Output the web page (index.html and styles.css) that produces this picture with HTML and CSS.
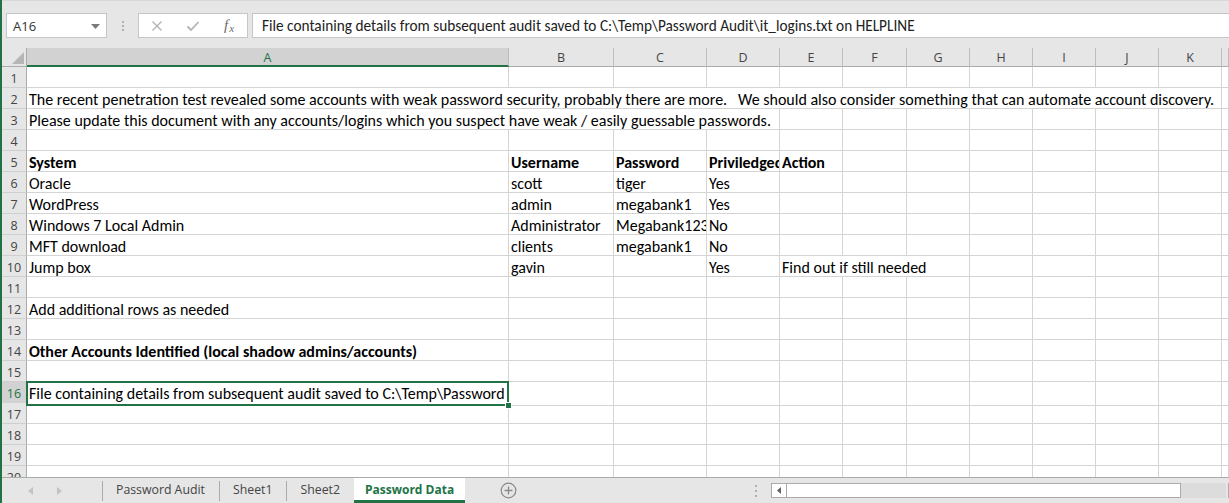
FILE: index.html
```html
<!DOCTYPE html>
<html>
<head>
<meta charset="utf-8">
<link rel="stylesheet" href="styles.css">
</head>
<body>
<div class="app">
  <div class="fbar">
    <div class="namebox"><span>A16</span><svg class="dd" width="9" height="5" viewBox="0 0 9 5"><polygon points="0,0 9,0 4.5,5" fill="#7a7a7a"/></svg></div>
    <div class="vdots"><i></i><i></i><i></i></div>
    <div class="fbtns">
      <span class="fb"><svg width="12" height="12" viewBox="0 0 12 12"><path d="M1.5 1.5 L10.5 10.5 M10.5 1.5 L1.5 10.5" stroke="#b3b3b3" stroke-width="1.4" fill="none"/></svg></span>
      <span class="fb"><svg width="14" height="12" viewBox="0 0 14 12"><path d="M1.5 6.5 L5 10 L12.5 2" stroke="#b3b3b3" stroke-width="1.8" fill="none"/></svg></span>
      <span class="fb fx"><span class="fxf">f</span><span class="fxx">x</span></span>
    </div>
    <div class="finput">File containing details from subsequent audit saved to C:\Temp\Password Audit\it_logins.txt on HELPLINE</div>
  </div>

  <div class="sheet">
    <div class="row head">
      <span class="corner"><svg width="12" height="12" viewBox="0 0 12 12"><polygon points="12,0 12,12 0,12" fill="#b5b5b5"/></svg></span>
      <span class="ch selc">A</span><span class="ch">B</span><span class="ch">C</span><span class="ch">D</span><span class="ch">E</span><span class="ch">F</span><span class="ch">G</span><span class="ch">H</span><span class="ch">I</span><span class="ch">J</span><span class="ch">K</span><span class="ch"></span>
    </div>
    <div class="row"><span class="rh">1</span><span></span><span></span><span></span><span></span><span></span><span></span><span></span><span></span><span></span><span></span><span></span><span></span></div>
    <div class="row"><span class="rh">2</span><span class="s11">The recent penetration test revealed some accounts with weak password security, probably there are more.   We should also consider something that can automate account discovery.</span><span></span></div>
    <div class="row"><span class="rh">3</span><span class="s4">Please update this document with any accounts/logins which you suspect have weak / easily guessable passwords.</span><span></span><span></span><span></span><span></span><span></span><span></span><span></span><span></span></div>
    <div class="row"><span class="rh">4</span><span></span><span></span><span></span><span></span><span></span><span></span><span></span><span></span><span></span><span></span><span></span><span></span></div>
    <div class="row bold"><span class="rh">5</span><span>System</span><span>Username</span><span>Password</span><span>Priviledged</span><span>Action</span><span></span><span></span><span></span><span></span><span></span><span></span><span></span></div>
    <div class="row"><span class="rh">6</span><span>Oracle</span><span>scott</span><span>tiger</span><span>Yes</span><span></span><span></span><span></span><span></span><span></span><span></span><span></span><span></span></div>
    <div class="row"><span class="rh">7</span><span>WordPress</span><span>admin</span><span>megabank1</span><span>Yes</span><span></span><span></span><span></span><span></span><span></span><span></span><span></span><span></span></div>
    <div class="row"><span class="rh">8</span><span>Windows 7 Local Admin</span><span>Administrator</span><span>Megabank123</span><span>No</span><span></span><span></span><span></span><span></span><span></span><span></span><span></span><span></span></div>
    <div class="row"><span class="rh">9</span><span>MFT download</span><span>clients</span><span>megabank1</span><span>No</span><span></span><span></span><span></span><span></span><span></span><span></span><span></span><span></span></div>
    <div class="row"><span class="rh">10</span><span>Jump box</span><span>gavin</span><span></span><span>Yes</span><span class="s3">Find out if still needed</span><span></span><span></span><span></span><span></span><span></span></div>
    <div class="row"><span class="rh">11</span><span></span><span></span><span></span><span></span><span></span><span></span><span></span><span></span><span></span><span></span><span></span><span></span></div>
    <div class="row"><span class="rh">12</span><span>Add additional rows as needed</span><span></span><span></span><span></span><span></span><span></span><span></span><span></span><span></span><span></span><span></span><span></span></div>
    <div class="row"><span class="rh">13</span><span></span><span></span><span></span><span></span><span></span><span></span><span></span><span></span><span></span><span></span><span></span><span></span></div>
    <div class="row bold"><span class="rh">14</span><span>Other Accounts Identified (local shadow admins/accounts)</span><span></span><span></span><span></span><span></span><span></span><span></span><span></span><span></span><span></span><span></span><span></span></div>
    <div class="row"><span class="rh">15</span><span></span><span></span><span></span><span></span><span></span><span></span><span></span><span></span><span></span><span></span><span></span><span></span></div>
    <div class="row"><span class="rh selr">16</span><span class="sel"><span class="clip">File containing details from subsequent audit saved to C:\Temp\Password Audit\it_logins.txt on HELPLINE</span><b class="handle"></b></span><span></span><span></span><span></span><span></span><span></span><span></span><span></span><span></span><span></span><span></span><span></span></div>
    <div class="row"><span class="rh">17</span><span></span><span></span><span></span><span></span><span></span><span></span><span></span><span></span><span></span><span></span><span></span><span></span></div>
    <div class="row"><span class="rh">18</span><span></span><span></span><span></span><span></span><span></span><span></span><span></span><span></span><span></span><span></span><span></span><span></span></div>
    <div class="row"><span class="rh">19</span><span></span><span></span><span></span><span></span><span></span><span></span><span></span><span></span><span></span><span></span><span></span><span></span></div>
    <div class="row"><span class="rh">20</span><span></span><span></span><span></span><span></span><span></span><span></span><span></span><span></span><span></span><span></span><span></span><span></span></div>
  </div>

  <div class="tabbar">
    <div class="nav">
      <svg width="5" height="8" viewBox="0 0 5 8"><polygon points="5,0 5,8 0,4" fill="#c3c3c3"/></svg>
      <svg width="5" height="8" viewBox="0 0 5 8"><polygon points="0,0 0,8 5,4" fill="#c3c3c3"/></svg>
    </div>
    <div class="tab">Password Audit</div>
    <div class="tab">Sheet1</div>
    <div class="tab">Sheet2</div>
    <div class="tab active">Password Data</div>
    <div class="addsheet"><svg width="17" height="17" viewBox="0 0 17 17"><circle cx="8.5" cy="8.5" r="7.3" stroke="#8a8a8a" stroke-width="1.2" fill="none"/><path d="M8.5 4.5 V12.5 M4.5 8.5 H12.5" stroke="#8a8a8a" stroke-width="1.3"/></svg></div>
    <div class="hscroll">
      <div class="vdots small"><i></i><i></i><i></i></div>
      <div class="sbar">
        <span class="sbtn"><svg width="4" height="7" viewBox="0 0 4 7"><polygon points="4,0 4,7 0,3.5" fill="#606060"/></svg></span>
        <span class="thumb"></span>
        <span class="track"></span>
        <span class="sbtn"></span>
      </div>
    </div>
  </div>
</div>
</body>
</html>
```

FILE: styles.css
```css
* { box-sizing: border-box; }
html, body { margin: 0; padding: 0; }
body {
  width: 1229px;
  height: 503px;
  overflow: hidden;
  background: #e6e6e6;
  font-family: "Open Sans", "Noto Sans", sans-serif;
}
.app {
  height: 503px;
  border-left: 2px solid #217346;
  display: flex;
  flex-direction: column;
  overflow: hidden;
}

/* formula bar */
.fbar {
  height: 48px;
  flex: none;
  display: flex;
  align-items: flex-start;
  padding: 12px 0 0 4px;
  border-top: 1px solid #d7d7d7;
}
.namebox {
  width: 101px;
  height: 25px;
  background: #fff;
  border: 1px solid #c6c6c6;
  display: flex;
  align-items: center;
  justify-content: space-between;
  padding: 0 6px 0 6px;
  font-size: 13px;
  color: #333;
}
.dd { margin-top: 1px; }
.vdots {
  width: 3px;
  height: 25px;
  margin-left: 15px;
  display: flex;
  flex-direction: column;
  justify-content: center;
  gap: 2px;
}
.vdots i {
  display: block;
  width: 2px;
  height: 2px;
  background: #b0b0b0;
}
.fbtns {
  margin-left: 13px;
  width: 110px;
  height: 25px;
  background: #fff;
  border: 1px solid #c6c6c6;
  display: flex;
  align-items: center;
}
.fb {
  width: 36px;
  height: 23px;
  display: flex;
  align-items: center;
  justify-content: center;
}
.fx {
  font-family: "Liberation Serif", serif;
  font-style: italic;
  color: #6a6a6a;
  font-size: 15px;
}
.fxx { font-size: 11px; margin-top: 4px; margin-left: 1px; }
.finput {
  flex: 1;
  margin-left: 4px;
  height: 25px;
  background: #fff;
  border: 1px solid #c6c6c6;
  border-right: none;
  padding-left: 9px;
  font-family: Carlito, "Liberation Sans", sans-serif;
  font-size: 15.3px;
  line-height: 23px;
  color: #222;
  white-space: nowrap;
  overflow: hidden;
}

/* sheet */
.sheet {
  flex: 1;
  background: #fff;
  overflow: hidden;
}
.row {
  display: grid;
  grid-template-columns: 25px 482px 105px 93px 73px 63px 64px 63px 63px 63px 63px 63px 1fr;
  height: 21px;
}
.row > span {
  border-right: 1px solid #d4d4d4;
  border-bottom: 1px solid #d4d4d4;
  padding: 0 2px;
  font-family: Carlito, "Liberation Sans", sans-serif;
  font-size: 16px;
  line-height: 23px;
  color: #000;
  white-space: pre;
  overflow: hidden;
}
.row.bold > span { font-weight: bold; }
.row > .rh {
  background: #e6e6e6;
  border-right: 1px solid #ababab;
  border-bottom: 1px solid #cfcfcf;
  font-family: "Open Sans", "Noto Sans", sans-serif;
  font-weight: normal !important;
  font-size: 12.5px;
  line-height: 23px;
  color: #444;
  text-align: center;
  padding: 0;
}
.row > .selr { background: #d2d2d2; color: #217346; }
.row.head { height: 19px; }
.row.head > span {
  background: #e6e6e6;
  border-right: 1px solid #bdbdbd;
  border-bottom: 1px solid #ababab;
  font-family: "Open Sans", "Noto Sans", sans-serif;
  font-size: 12.5px;
  line-height: 19px;
  color: #444;
  text-align: center;
  padding: 0;
}
.row.head > .corner {
  border-right: 1px solid #ababab;
  display: flex;
  align-items: flex-end;
  justify-content: flex-end;
  padding: 0 2px 2px 0;
}
.row.head > .selc {
  background: #d2d2d2;
  border-bottom: 2px solid #217346;
  color: #217346;
}
.s11 { grid-column: span 11; }
.s4 { grid-column: span 4; }
.s3 { grid-column: span 3; }

.row > .sel {
  position: relative;
  overflow: visible;
}
.sel .clip {
  display: block;
  overflow: hidden;
  white-space: pre;
}
.sel::after {
  content: "";
  position: absolute;
  left: -1px;
  top: -1px;
  right: -1px;
  bottom: -1px;
  border: 2px solid #217346;
  pointer-events: none;
}
.handle {
  position: absolute;
  right: -4px;
  bottom: -4px;
  width: 7px;
  height: 7px;
  background: #217346;
  border: 1px solid #fff;
  z-index: 2;
}

/* tab bar */
.tabbar {
  height: 26px;
  flex: none;
  display: flex;
  align-items: stretch;
  border-top: 1px solid #ababab;
  background: #e6e6e6;
  font-size: 12.3px;
  color: #444;
}
.nav {
  width: 100px;
  display: flex;
  align-items: center;
  gap: 24px;
  padding-left: 26px;
}
.tab {
  position: relative;
  display: flex;
  align-items: center;
  padding: 0 14px 2px 14px;
  white-space: nowrap;
}
.tab::before {
  content: "";
  position: absolute;
  left: 0;
  top: 3px;
  bottom: 2px;
  width: 1px;
  background: #ababab;
}
.tab.active {
  background: #fff;
  color: #217346;
  font-weight: bold;
  font-size: 12px;
  padding: 0 11px 0 11px;
  border-bottom: 3px solid #217346;
}
.tab.active::before { display: none; }
.addsheet {
  display: flex;
  align-items: center;
  margin-left: 35px;
}
.hscroll {
  margin-left: auto;
  width: 474px;
  display: flex;
  align-items: center;
}
.vdots.small {
  margin-left: 0;
  height: 14px;
  gap: 3px;
}
.sbar {
  margin-left: 14px;
  height: 15px;
  display: flex;
  flex: none;
}
.sbtn {
  width: 16px;
  height: 15px;
  background: #fff;
  border: 1px solid #ababab;
  display: flex;
  align-items: center;
  justify-content: center;
}
.thumb {
  width: 394px;
  height: 15px;
  background: #fff;
  border: 1px solid #ababab;
  border-left: none;
}
.track {
  width: 45px;
  height: 15px;
  background: #dcdcdc;
  margin-right: 2px;
}
```
